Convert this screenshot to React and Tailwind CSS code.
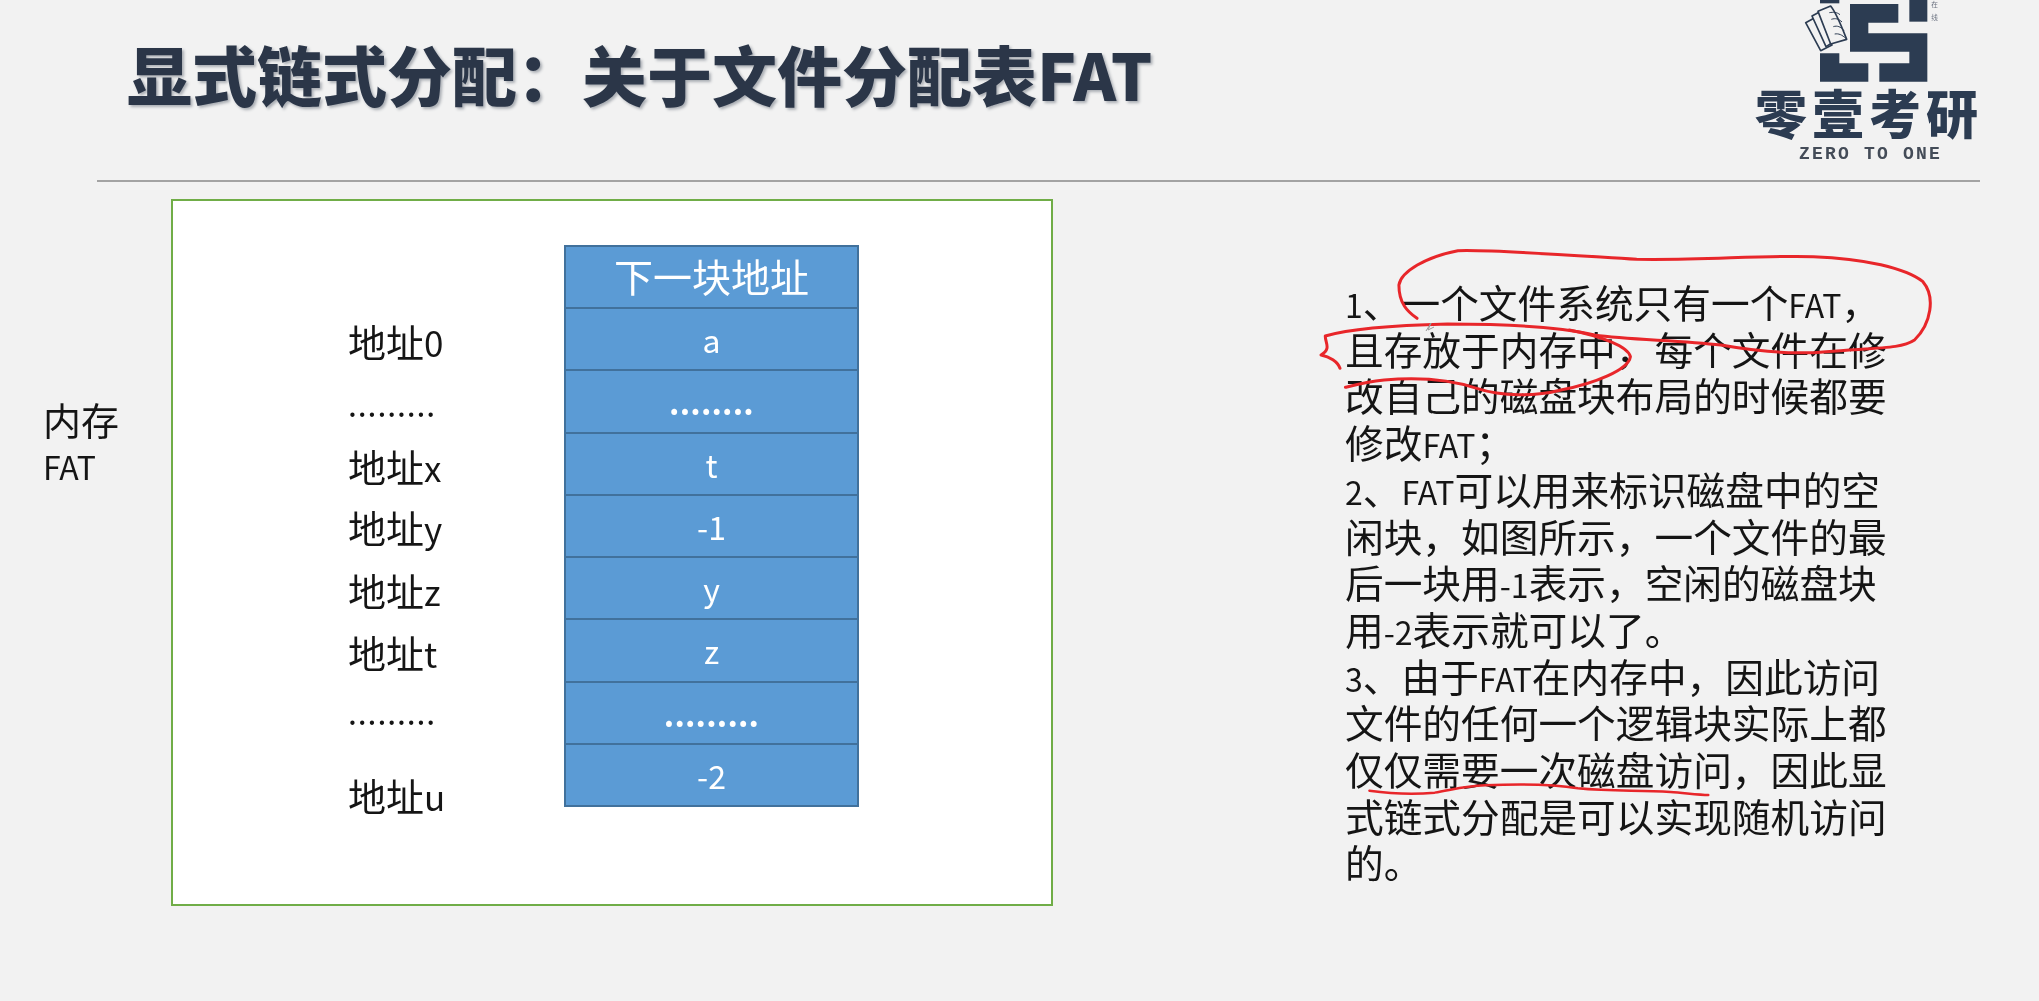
const rows = ["a", "........", "t", "-1", "y", "z", ".........", "-2"];

const addresses = [
  { text: "0", row: "h-[69px] leading-[62px]" },
  { text: ".........", row: "h-[56px] leading-[44px]", dots: true },
  { text: "x", row: "h-[61px] leading-[62px]" },
  { text: "y", row: "h-[63px] leading-[62px]" },
  { text: "z", row: "h-[62px] leading-[62px]" },
  { text: "t", row: "h-[70px] leading-[62px]" },
  { text: ".........", row: "h-[73px] leading-[36px]", dots: true },
  { text: "u", row: "h-[62px] leading-[62px]" },
];

function Latin({ children }) {
  return <span className="text-[32px] leading-none">{children}</span>;
}

export default function App() {
  return (
    <div className="relative h-[1001px] w-full overflow-hidden bg-[#f2f2f2] font-['Noto_Sans_CJK_SC',sans-serif] text-[#151515] blur-[0.5px]">
      {/* header */}
      <header className="flex h-[180px] items-start justify-between pl-[127px] pr-[57px]">
        <h1 className="mt-[33px] text-[65px] leading-[80px] font-black whitespace-nowrap text-[#2b3648] [text-shadow:2px_2px_3px_#a9adb3]">
          显式链式分配：关于文件分配表FAT
        </h1>
        <Logo />
      </header>
      <div className="ml-[97px] h-[2px] w-[1883px] bg-[#a3a3a3]" />

      {/* body */}
      <main className="flex">
        <div className="flex w-[171px] flex-col pt-[212px] pl-[43px]">
          <span className="text-[38px] leading-[50px]">内存</span>
          <span className="text-[32px] leading-[44px]">FAT</span>
        </div>

        <section className="mt-[17px] flex h-[707px] w-[882px] border-2 border-[#70ad47] bg-white">
          <div className="w-[391px] pt-[109px] pl-[175px]">
            {addresses.map((a, i) => (
              <div key={i} className={`${a.row} text-[38px] whitespace-nowrap`}>
                {a.dots ? (
                  <span className="text-[32px] tracking-[0.9px]">{a.text}</span>
                ) : (
                  <>
                    地址<span className="text-[35px] leading-none">{a.text}</span>
                  </>
                )}
              </div>
            ))}
          </div>

          <div className="mt-[44px] flex h-[562px] w-[295px] flex-col border-2 border-[#41719c] bg-[#5b9bd5] text-center text-white">
            <div className="flex-1 border-b-2 border-[#41719c] text-[39px] leading-[56px]">
              下一块地址
            </div>
            {rows.map((r, i) => (
              <div
                key={i}
                className={`flex-1 text-[32px] leading-[60px] ${i < rows.length - 1 ? "border-b-2 border-[#41719c]" : ""}`}
              >
                {r.startsWith(".") ? <span className="font-bold tracking-[0.2px]">{r}</span> : r}
              </div>
            ))}
          </div>
        </section>

        <div className="ml-[292px] w-[560px] pt-[96px] text-[38.7px] leading-[46.7px] whitespace-nowrap">
          <div><Latin>1</Latin>、一个文件系统只有一个<Latin>FAT</Latin>，</div>
          <div>且存放于内存中，每个文件在修</div>
          <div>改自己的磁盘块布局的时候都要</div>
          <div>修改<Latin>FAT</Latin>；</div>
          <div><Latin>2</Latin>、<Latin>FAT</Latin>可以用来标识磁盘中的空</div>
          <div>闲块，如图所示，一个文件的最</div>
          <div>后一块用<Latin>-1</Latin>表示，空闲的磁盘块</div>
          <div>用<Latin>-2</Latin>表示就可以了。</div>
          <div><Latin>3</Latin>、由于<Latin>FAT</Latin>在内存中，因此访问</div>
          <div>文件的任何一个逻辑块实际上都</div>
          <div>仅仅需要一次磁盘访问，因此显</div>
          <div>式链式分配是可以实现随机访问</div>
          <div>的。</div>
        </div>
      </main>

      {/* pen annotations on top of the slide */}
      <svg className="pointer-events-none absolute inset-0 h-full w-full" viewBox="0 0 2039 1001" fill="none">
        <g transform="translate(1300 240) scale(0.4209 0.3333)" stroke="#e8262a" strokeLinecap="round" strokeLinejoin="round">
          <path
            vectorEffect="non-scaling-stroke"
            strokeWidth="3"
            d="M278 235 C255 215 235 190 235 135 C240 95 300 50 375 32 C450 28 600 42 800 58 C950 62 1100 45 1220 50 C1340 55 1440 85 1480 125 C1510 170 1500 250 1460 300 C1430 325 1390 322 1250 335 C1170 345 1090 335 1000 315 C900 300 780 300 700 285 C620 262 500 252 350 252 C250 255 130 262 60 288 C60 310 75 325 50 345 C70 350 90 365 95 385"
          />
          <path
            vectorEffect="non-scaling-stroke"
            strokeWidth="3"
            d="M640 270 C720 290 780 320 785 350 C780 390 700 430 620 450 C560 470 480 470 420 445 C360 420 290 410 200 420 C160 425 130 435 108 442"
          />
        </g>
        <g transform="translate(1300 520) scale(0.4209 0.3333)" stroke="#e8262a" strokeLinecap="round">
          <path
            vectorEffect="non-scaling-stroke"
            strokeWidth="2.5"
            d="M165 812 C210 820 260 825 320 818 C360 810 390 798 440 796 C520 792 600 792 660 805 C740 815 800 810 880 816 C920 820 950 825 970 825"
          />
        </g>
        <path d="M1426 331 L1431 323 L1428 330 L1434 327" stroke="#9a9a9a" strokeWidth="1" />
      </svg>
    </div>
  );
}

function Logo() {
  return (
    <div className="flex w-[225px] flex-col text-[#2c3c52]">
      <svg className="ml-[33px]" width="160" height="85" viewBox="0 0 480 255" fill="#2c3c52">
        <path d="M90 0H148V10H90Z" />
        <path d="M180 12H325V68H235V100H412V245H268V190H358V155H180Z" />
        <path d="M358 0H412V65H358Z" />
        <path d="M90 160H148V190H235V245H90Z" />
        <g fill="none" stroke="#2c3c52" strokeWidth="5" strokeLinejoin="round">
          <path d="M47 68 L84 48 L126 135 L92 152 Z" />
          <path d="M66 48 L104 28 L140 120 L108 140 Z" fill="#f2f2f2" />
          <path d="M84 34 L122 18 C140 40 155 80 170 118 L122 132 Z" fill="#f2f2f2" />
          <path d="M118 38 C130 36 140 36 150 44 M124 58 C136 54 146 56 156 66 M130 80 C142 76 152 80 162 92 M134 102 C146 100 156 104 168 116" strokeWidth="3" />
        </g>
        <text x="424" y="22" fontSize="20" fill="#6b7280" stroke="none">在</text>
        <text x="424" y="60" fontSize="20" fill="#6b7280" stroke="none">线</text>
      </svg>
      <div className="mt-[1px] -ml-[2px] text-[52px] leading-[52px] font-black tracking-[5px] whitespace-nowrap">零壹考研</div>
      <div className="mt-[5px] pl-[42px] font-['Liberation_Mono',monospace] text-[18px] leading-[22px] font-bold tracking-[2.2px] whitespace-nowrap text-[#444c58]">
        ZERO TO ONE
      </div>
    </div>
  );
}
